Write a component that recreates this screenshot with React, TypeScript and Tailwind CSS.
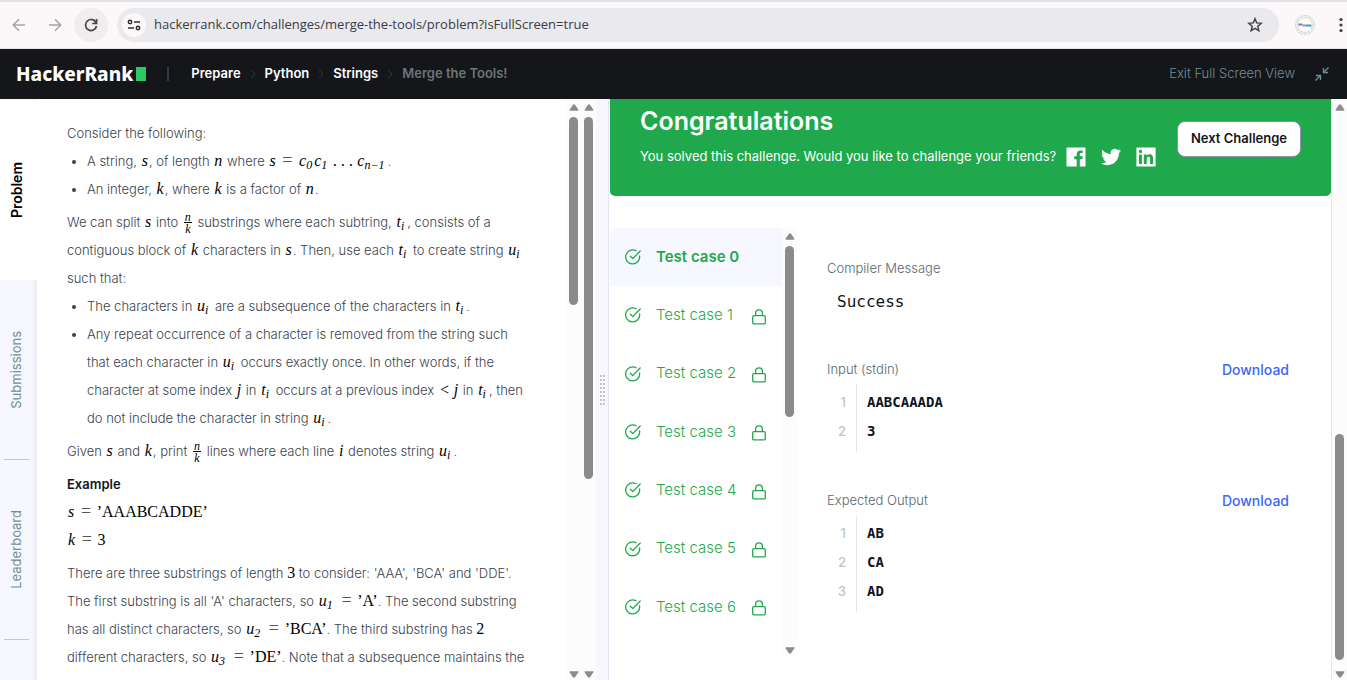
import React from "react";

type ScrollbarProps = { before: string; thumb: string };

function Scrollbar({ before, thumb }: ScrollbarProps) {
  return (
    <div className="flex w-[15px] shrink-0 flex-col items-center bg-[#fcfcfc] pt-[5px] pb-0.5" aria-hidden="true">
      <svg className="h-[7px] w-[10px] shrink-0" viewBox="0 0 10 7">
        <path d="M5 .2c.5 0 .8.2 1 .5L9.300 5.500c.4.700.1 1.200-.6 1.200H1.300C.6 6.700.3 6.200.7 5.500L4 .7c.2-.3.5-.5 1-.5z" fill="#8b8b8b" />
      </svg>
      <div className={before} />
      <div className={`w-[9px] shrink-0 rounded-full bg-[#8b8b8b] ${thumb}`} />
      <div className="flex-1" />
      <svg className="h-[7px] w-[10px] shrink-0" viewBox="0 0 10 7">
        <path d="M5 6.800c-.5 0-.8-.2-1-.5L.7 1.500C.3.800.6.300 1.300.3h7.400c.7 0 1 .5.600 1.200L6 6.300c-.2.3-.5.5-1 .5z" fill="#8b8b8b" />
      </svg>
    </div>
  );
}

function M({ children }: { children: React.ReactNode }) {
  return <span className="px-px font-['Liberation_Serif',serif] text-base leading-none text-black italic">{children}</span>;
}

function R({ children }: { children: React.ReactNode }) {
  return <span className="font-['Liberation_Serif',serif] text-base leading-none text-black not-italic">{children}</span>;
}

function Eq() {
  return <span className="mx-0.5 font-['Liberation_Serif',serif] text-lg leading-none text-[#555]">=</span>;
}

function Sub({ children }: { children: React.ReactNode }) {
  return <sub className="bottom-[-3px] mr-0.5 text-xs leading-none">{children}</sub>;
}

function Frac() {
  return (
    <span className="mx-0.5 inline-flex flex-col items-center align-middle font-['Liberation_Serif',serif] text-xs leading-[10px] text-black italic">
      <span className="border-b border-black px-px">n</span>
      <span className="pt-px">k</span>
    </span>
  );
}

function BrowserBar() {
  return (
    <div className="flex h-[49px] shrink-0 items-center border-t-2 border-b border-t-[#dfe1e8] border-b-[#e6e3e8] bg-[#fcf8f9] pl-[7px]">
      <button aria-label="Back" className="flex w-6 justify-center text-[#a6a4a7]">
        <svg width="14" height="14" viewBox="0 0 14 14" fill="none" stroke="currentColor" strokeWidth="1.500">
          <path d="M13 7H1.500M7 1.200 1.200 7 7 12.800" />
        </svg>
      </button>
      <button aria-label="Forward" className="ml-3 flex w-6 justify-center text-[#a6a4a7]">
        <svg width="14" height="14" viewBox="0 0 14 14" fill="none" stroke="currentColor" strokeWidth="1.500">
          <path d="M1 7h11.500M7 1.200 12.800 7 7 12.800" />
        </svg>
      </button>
      <button aria-label="Reload" className="ml-[7px] flex size-[34px] items-center justify-center rounded-full bg-[#f1edee] text-[#46464a]">
        <svg width="14" height="14" viewBox="0 0 14 14" fill="none" stroke="currentColor" strokeWidth="1.700">
          <path d="M12.200 5A5.500 5.500 0 1 0 12.500 8" />
          <path d="M12.600 1v4.500H8.200" />
        </svg>
      </button>
      <div className="ml-[9px] flex h-[34px] flex-1 items-center rounded-full bg-[#e9e9ee] pr-4 pl-[5px]">
        <button aria-label="View site information" className="flex size-6 items-center justify-center rounded-full bg-[#fcf8f9] text-[#2f2f33]">
          <svg width="14" height="12" viewBox="0 0 14 12" fill="none" stroke="currentColor" strokeWidth="1.500">
            <circle cx="3" cy="3" r="1.700" />
            <path d="M7 3h6M1 9h6" />
            <circle cx="11" cy="9" r="1.700" />
          </svg>
        </button>
        <input
          aria-label="Address"
          readOnly
          value="hackerrank.com/challenges/merge-the-tools/problem?isFullScreen=true"
          className="ml-2 min-w-0 flex-1 bg-transparent font-['Open_Sans','Noto_Sans',sans-serif] text-[13px] text-[#3c3c42] outline-none"
        />
        <button aria-label="Bookmark this tab" className="text-[#46464a]">
          <svg width="16" height="16" viewBox="0 0 16 16" fill="none" stroke="currentColor" strokeWidth="1.500">
            <path d="m8 1.800 1.700 4.100 4.500.4-3.400 2.900 1 4.400L8 11.300l-3.800 2.300 1-4.400-3.400-2.900 4.500-.4z" />
          </svg>
        </button>
      </div>
      <button aria-label="Profile" className="ml-4">
        <svg width="20" height="20" viewBox="0 0 20 20" fill="none">
          <circle cx="10" cy="10" r="9.300" fill="#fff" stroke="#a9d9e8" strokeWidth="1.200" strokeDasharray="2 .8" />
          <circle cx="10" cy="10" r="7.500" stroke="#f1cba8" />
          <path d="M3.500 9.500h4" stroke="#5a7fc4" strokeWidth="2" />
          <path d="M7.500 10.500h3" stroke="#d9778b" strokeWidth="2" />
          <path d="M10.500 10.500h6" stroke="#3d9cc9" strokeWidth="2" />
        </svg>
      </button>
      <button aria-label="Menu" className="ml-5 flex w-3 justify-center text-[#3c3c42]">
        <svg width="4" height="16" viewBox="0 0 4 16" fill="currentColor">
          <circle cx="2" cy="2.500" r="1.600" />
          <circle cx="2" cy="8" r="1.600" />
          <circle cx="2" cy="13.500" r="1.600" />
        </svg>
      </button>
    </div>
  );
}

function Crumb() {
  return (
    <svg className="mx-2 shrink-0" width="8" height="10" viewBox="0 0 8 10" fill="none" stroke="#30343b" aria-hidden="true">
      <path d="m2 1 4 4-4 4" />
    </svg>
  );
}

function Header() {
  return (
    <header className="flex h-[50px] shrink-0 items-center bg-[#14161a] pr-[18px] pl-4 text-[13px] text-white">
      <a href="#home" className="flex items-center gap-[3px] font-['Noto_Sans',sans-serif] text-[19px] font-extrabold">
        HackerRank
        <span className="h-[14px] w-2.5 bg-[#2ec866]" />
      </a>
      <span className="ml-[21px] h-[14px] w-0.5 bg-[#39393a]" />
      <nav aria-label="Breadcrumb" className="ml-[22px] flex items-center font-semibold">
        <a href="#prepare">Prepare</a>
        <Crumb />
        <a href="#python">Python</a>
        <Crumb />
        <a href="#strings">Strings</a>
        <Crumb />
        <span className="text-[#6b7578]">Merge the Tools!</span>
      </nav>
      <button className="ml-auto flex items-center gap-5 font-light text-[#738f93]">
        Exit Full Screen View
        <svg width="14" height="14" viewBox="0 0 14 14" fill="none" stroke="currentColor" strokeWidth="1.300">
          <path d="M13.500.5 8.500 5.500M8.500 1v4.500H13M.5 13.500l5-5M1 8.500h4.500V13" />
        </svg>
      </button>
    </header>
  );
}

const sideTabs = [
  { name: "Problem", active: true },
  { name: "Submissions", active: false },
  { name: "Leaderboard", active: false },
];

function SideTabs() {
  return (
    <nav aria-label="Challenge sections" className="flex w-[37px] shrink-0 flex-col bg-[linear-gradient(to_right,#f7f8ff_85%,#e9ebf2)] pt-px text-[13px]">
      {sideTabs.map((tab) => (
        <a
          key={tab.name}
          href={`#${tab.name.toLowerCase()}`}
          className={
            tab.active
              ? "flex h-[180px] bg-white px-1 text-sm font-semibold text-black"
              : "flex h-[180px] px-1 text-[#6d9094]"
          }
        >
          <span
            className={
              tab.active
                ? "flex w-[25px] items-center justify-center"
                : "flex w-[25px] items-center justify-center border-b border-[#bccbd0]"
            }
          >
            <span className="rotate-180 [writing-mode:vertical-rl]">{tab.name}</span>
          </span>
        </a>
      ))}
    </nav>
  );
}

function Problem() {
  return (
    <article className="flex min-w-0 flex-1 flex-col gap-[5px] overflow-hidden pt-5 pl-[30px] text-[13px] leading-7 font-light whitespace-nowrap text-[#39424e]">
      <div>
        <p>Consider the following:</p>
        <ul className="list-disc pl-5">
          <li>A string, <M>s</M>, of length <M>n</M> where <M>s</M> <Eq /> <M>c<Sub>0</Sub>c<Sub>1</Sub> . . . c<Sub>n−1</Sub></M>.</li>
          <li>An integer, <M>k</M>, where <M>k</M> is a factor of <M>n</M>.</li>
        </ul>
      </div>
      <div>
        <p>
          We can split <M>s</M> into <Frac /> substrings where each subtring, <M>t<Sub>i</Sub></M>, consists of a
          <br />
          contiguous block of <M>k</M> characters in <M>s</M>. Then, use each <M>t<Sub>i</Sub></M> to create string <M>u<Sub>i</Sub></M>
          <br />
          such that:
        </p>
        <ul className="list-disc pl-5">
          <li>The characters in <M>u<Sub>i</Sub></M> are a subsequence of the characters in <M>t<Sub>i</Sub></M>.</li>
          <li>
            Any repeat occurrence of a character is removed from the string such
            <br />
            that each character in <M>u<Sub>i</Sub></M> occurs exactly once. In other words, if the
            <br />
            character at some index <M>j</M> in <M>t<Sub>i</Sub></M> occurs at a previous index <M>&lt; j</M> in <M>t<Sub>i</Sub></M>, then
            <br />
            do not include the character in string <M>u<Sub>i</Sub></M>.
          </li>
        </ul>
      </div>
      <p>Given <M>s</M> and <M>k</M>, print <Frac /> lines where each line <M>i</M> denotes string <M>u<Sub>i</Sub></M>.</p>
      <div>
        <h2 className="font-semibold text-[#14161a]">Example</h2>
        <p><M>s</M> <Eq /> <R>’AAABCADDE’</R></p>
        <p><M>k</M> <Eq /> <R>3</R></p>
      </div>
      <p>
        There are three substrings of length <R>3</R> to consider: 'AAA', 'BCA' and 'DDE'.
        <br />
        The first substring is all 'A' characters, so <M>u<Sub>1</Sub></M> <Eq /> <R>’A’</R>. The second substring
        <br />
        has all distinct characters, so <M>u<Sub>2</Sub></M> <Eq /> <R>’BCA’</R>. The third substring has <R>2</R>
        <br />
        different characters, so <M>u<Sub>3</Sub></M> <Eq /> <R>’DE’</R>. Note that a subsequence maintains the
      </p>
    </article>
  );
}

function Splitter() {
  return (
    <div role="separator" aria-orientation="vertical" className="flex w-[13px] shrink-0 items-center justify-center border-r border-[#e3e5f0] bg-[#f7f8ff]">
      <svg width="5" height="30" viewBox="0 0 5 30" fill="#c5c5c8">
        {[0, 4, 8, 12, 16, 20, 24, 28].map((y) => (
          <g key={y}>
            <rect x="0" y={y} width="2" height="2" />
            <rect x="3" y={y} width="2" height="2" />
          </g>
        ))}
      </svg>
    </div>
  );
}

function Banner() {
  return (
    <section className="flex h-[97px] shrink-0 items-start justify-between rounded-b-[5px] bg-[#1fa94c] px-[30px] text-white">
      <div className="flex flex-col pt-1">
        <h1 className="text-[25px] leading-9 font-semibold">Congratulations</h1>
        <div className="flex h-[35px] items-center text-[13px]">
          <span>You solved this challenge. Would you like to challenge your friends?</span>
          <a href="#facebook" aria-label="Share on Facebook" className="ml-2.5">
            <svg width="20" height="20" viewBox="0 0 20 20" fill="currentColor">
              <path d="M1 .5h18q.5 0 .5.500v18q0 .5-.5.500h-5.200v-7.300h2.500l.4-2.900h-2.900V7.500c0-.9.300-1.400 1.400-1.400h1.500V3.500c-.3 0-1.200-.1-2.200-.1-2.300 0-3.800 1.300-3.800 3.800v2.100H8.200v2.900h2.500v7.300H1q-.5 0-.5-.5V1Q.5.500 1 .5z" />
            </svg>
          </a>
          <a href="#twitter" aria-label="Share on Twitter" className="ml-[15px]">
            <svg width="20" height="20" viewBox="0 0 24 24" fill="currentColor">
              <path d="M23.950 4.570a10 10 0 0 1-2.820.780 4.960 4.960 0 0 0 2.160-2.720c-.95.550-2 .950-3.130 1.180a4.920 4.920 0 0 0-8.380 4.480C7.690 8.090 4.070 6.130 1.640 3.160a4.820 4.820 0 0 0-.66 2.470c0 1.710.870 3.210 2.190 4.100a4.900 4.900 0 0 1-2.230-.61v.06c0 2.380 1.690 4.370 3.950 4.830a5 5 0 0 1-2.210.08 4.940 4.940 0 0 0 4.600 3.420A9.870 9.870 0 0 1 0 19.540a13.990 13.990 0 0 0 7.560 2.210c9.050 0 14-7.500 14-13.980 0-.21 0-.42-.02-.63a9.940 9.940 0 0 0 2.460-2.550z" />
            </svg>
          </a>
          <a href="#linkedin" aria-label="Share on LinkedIn" className="ml-[15px]">
            <svg width="20" height="20" viewBox="0 0 24 24" fill="currentColor">
              <path d="M20.450 20.450h-3.560v-5.570c0-1.330-.02-3.040-1.850-3.040-1.850 0-2.130 1.450-2.130 2.940v5.670H9.350V9h3.410v1.560h.05c.480-.9 1.640-1.850 3.370-1.850 3.600 0 4.270 2.370 4.270 5.460zM5.340 7.430a2.060 2.060 0 1 1 0-4.130 2.060 2.060 0 0 1 0 4.130zm1.780 13.020H3.560V9h3.560zM23 .5H1Q.5.5.5 1v22q0 .5.5.500h22q.5 0 .5-.5V1q0-.5-.5-.5z" />
            </svg>
          </a>
        </div>
      </div>
      <button className="mt-[22px] h-9 rounded-lg border border-[#8f93ab] bg-white px-[13px] text-[13px] font-semibold text-[#14161a]">
        Next Challenge
      </button>
    </section>
  );
}

function CheckIcon() {
  return (
    <svg className="shrink-0" width="16" height="16" viewBox="0 0 16 16" fill="none" stroke="currentColor" strokeWidth="1.300" strokeLinecap="round" strokeLinejoin="round" aria-hidden="true">
      <path d="M14.600 7a7 7 0 1 1-3.500-5.200" />
      <path d="M5.300 7.300 7.800 9.600 15.200 2" />
    </svg>
  );
}

function LockIcon() {
  return (
    <svg className="mt-[3px] ml-auto shrink-0" width="14" height="16" viewBox="0 0 14 16" fill="none" stroke="currentColor" strokeWidth="1.300" strokeLinejoin="round" aria-hidden="true">
      <rect x=".7" y="6.700" width="12.600" height="8.200" rx="1.200" />
      <path d="M3.600 6.500V4.200a3.400 3.400 0 0 1 6.800 0v2.300" />
    </svg>
  );
}

const testCases = [0, 1, 2, 3, 4, 5, 6];

function TestCases() {
  return (
    <div className="flex h-[428px] w-[187px] shrink-0">
      <ul className="flex h-[408px] flex-1 flex-col text-[15px] text-[#1fa94c]">
        {testCases.map((n) => (
          <li key={n} className="flex min-h-0 flex-1">
            <button
              className={
                n === 0
                  ? "flex flex-1 items-center rounded-tl-lg bg-[#f7f8ff] pr-4 pl-[15px] font-semibold"
                  : "flex flex-1 items-center pr-4 pl-[15px] font-light"
              }
            >
              <CheckIcon />
              <span className="ml-[15px]">Test case {n}</span>
              {n > 0 && <LockIcon />}
            </button>
          </li>
        ))}
      </ul>
      <Scrollbar before="h-1.5" thumb="h-[171px]" />
    </div>
  );
}

function DataBlock({ title, lines }: { title: string; lines: string[] }) {
  return (
    <section className="flex flex-col">
      <div className="flex h-[31px] items-center justify-between pt-0.5">
        <h3 className="text-[13px] font-light text-[#576871]">{title}</h3>
        <a href="#download" className="text-sm font-medium text-[#3a66f8]">Download</a>
      </div>
      <ol className="flex flex-col">
        {lines.map((line, i) => (
          <li key={i} className="group flex text-sm leading-[29px]">
            <span className="w-[30px] border-r border-[#e3e9ea] pr-2.5 text-right text-[13px] font-medium text-[#b7c9cc] group-first:pt-1 group-last:pb-1.5">{i + 1}</span>
            <code className="pl-2.5 font-['DejaVu_Sans_Mono',monospace] font-bold text-[#0e141e] group-first:pt-1">{line}</code>
          </li>
        ))}
      </ol>
    </section>
  );
}

export default function App() {
  return (
    <div className="flex h-screen flex-col overflow-hidden bg-white font-['Inter','Liberation_Sans',sans-serif]">
      <BrowserBar />
      <Header />
      <div className="flex min-h-0 flex-1">
        <SideTabs />
        <div className="flex min-w-0 flex-[559_1_0%]">
          <Problem />
          <Scrollbar before="h-1.5" thumb="h-[188px]" />
          <Scrollbar before="h-1.5" thumb="h-[362px]" />
        </div>
        <Splitter />
        <main className="flex min-w-0 flex-[721_1_0%] flex-col border-r border-[#e6e6f2] pl-px">
          <Banner />
          <div className="mt-8 flex">
            <TestCases />
            <div className="flex min-w-0 flex-1 flex-col pt-[25px] pr-[42px] pl-[30px]">
              <h3 className="text-[13px] leading-[30px] font-light text-[#576871]">Compiler Message</h3>
              <p className="mt-2 pl-2.5 font-['DejaVu_Sans_Mono',monospace] text-base leading-[22px] text-[#0e141e]">Success</p>
              <div className="mt-10 flex flex-col gap-8">
                <DataBlock title="Input (stdin)" lines={["AABCAAADA", "3"]} />
                <DataBlock title="Expected Output" lines={["AB", "CA", "AD"]} />
              </div>
            </div>
          </div>
        </main>
        <Scrollbar before="h-[323px]" thumb="h-[226px]" />
      </div>
    </div>
  );
}
